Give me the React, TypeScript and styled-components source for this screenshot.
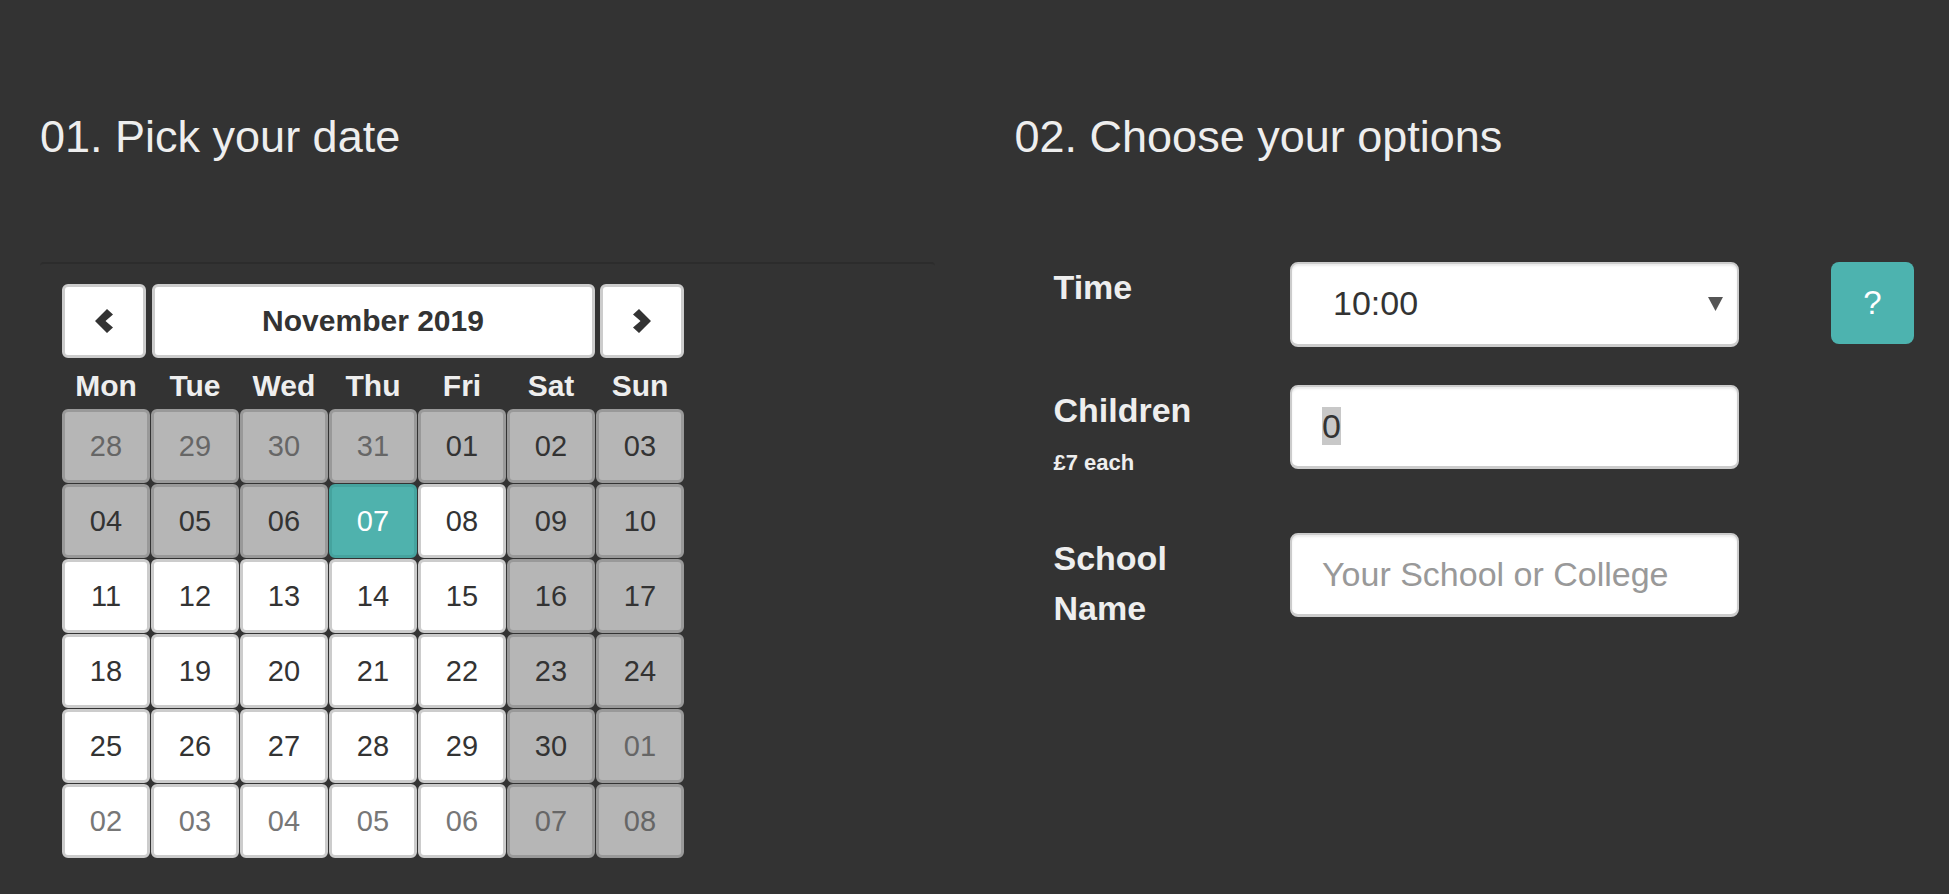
import styled, { createGlobalStyle } from "styled-components";

type Tone = "white" | "gray" | "selected";

interface DayCell {
  label: string;
  tone: Tone;
  muted?: boolean;
}

const GlobalStyle = createGlobalStyle`
  html, body {
    margin: 0;
    padding: 0;
    background: #333333;
    font-family: "Liberation Sans", Arial, sans-serif;
  }
  * {
    box-sizing: border-box;
  }
`;

const Page = styled.div`
  display: grid;
  grid-template-columns: minmax(0, 1fr) minmax(0, 1fr);
  min-height: 894px;
  background: #333333;
`;

const Column = styled.section`
  padding: 0 40px;
`;

const Heading = styled.h2`
  margin: 112px 0 100px;
  font-size: 45px;
  font-weight: 400;
  line-height: 1.1;
  color: #eeeeee;
`;

const Panel = styled.div`
  border-top: 2px solid #2c2c2c;
  border-radius: 4px;
  padding: 20px 22px;
`;

const Calendar = styled.div`
  width: 622px;
`;

const NavRow = styled.div`
  display: grid;
  grid-template-columns: 84px 1fr 84px;
  gap: 5.5px;
  height: 74px;
`;

const NavButton = styled.div`
  display: flex;
  align-items: center;
  justify-content: center;
  background: #ffffff;
  border: 3px solid #cccccc;
  border-radius: 6px;
  color: #333333;
  font-size: 30px;
  font-weight: 700;
`;

const DayNames = styled.div`
  display: grid;
  grid-template-columns: repeat(7, 1fr);
  gap: 1px;
  height: 51px;
  align-items: end;
  padding-bottom: 6px;
`;

const DayName = styled.div`
  text-align: center;
  color: #eeeeee;
  font-size: 30px;
  font-weight: 700;
`;

const DayGrid = styled.div`
  display: grid;
  grid-template-columns: repeat(7, 1fr);
  grid-auto-rows: 74px;
  gap: 1px;
`;

const toneStyles: Record<Tone, { bg: string; border: string; color: string; muted: string }> = {
  white: { bg: "#ffffff", border: "#cccccc", color: "#333333", muted: "#777777" },
  gray: { bg: "#b6b6b6", border: "#999999", color: "#333333", muted: "#666666" },
  selected: { bg: "#4fb2ad", border: "#45a39e", color: "#ffffff", muted: "#ffffff" },
};

const Day = styled.div<{ $tone: Tone; $muted?: boolean }>`
  display: flex;
  align-items: center;
  justify-content: center;
  padding-top: 1px;
  border: 3px solid ${(p) => toneStyles[p.$tone].border};
  border-radius: 6px;
  background: ${(p) => toneStyles[p.$tone].bg};
  color: ${(p) => (p.$muted ? toneStyles[p.$tone].muted : toneStyles[p.$tone].color)};
  font-size: 29px;
`;

const Form = styled.div`
  display: flex;
  flex-direction: column;
  gap: 38px;
  padding-left: 39px;
`;

const Row = styled.div`
  display: grid;
  grid-template-columns: 236.5px 449px 92px 83px;
  align-items: start;
`;

const Label = styled.div`
  max-width: 180px;
  color: #eeeeee;
  font-size: 34px;
  font-weight: 700;
  line-height: 50px;
`;

const Note = styled.div`
  margin: 11px 0 16px;
  font-size: 22px;
  line-height: 33px;
`;

const Select = styled.div`
  display: flex;
  align-items: center;
  justify-content: space-between;
  height: 85px;
  padding: 0 14px 0 41px;
  background: #ffffff;
  border: 2px solid #cccccc;
  border-bottom-width: 3px;
  border-radius: 8px;
  box-shadow: inset 0 2px 2px rgba(0, 0, 0, 0.075);
  color: #333333;
  font-size: 34px;
`;

const Field = styled.div`
  display: flex;
  align-items: center;
  height: 84px;
  padding-left: 30px;
  background: #ffffff;
  border: 2px solid #cccccc;
  border-bottom-width: 3px;
  border-radius: 8px;
  box-shadow: inset 0 2px 2px rgba(0, 0, 0, 0.075);
  color: #333333;
  font-size: 34px;
`;

const TextInput = styled.input`
  width: 100%;
  height: 84px;
  padding: 0 0 0 30px;
  background: #ffffff;
  border: 2px solid #cccccc;
  border-bottom-width: 3px;
  border-radius: 8px;
  box-shadow: inset 0 2px 2px rgba(0, 0, 0, 0.075);
  color: #333333;
  font-family: "Liberation Sans", Arial, sans-serif;
  font-size: 34px;
  outline: none;

  &::placeholder {
    color: #999999;
  }
`;

const Highlight = styled.span`
  background: #c8c8c8;
  line-height: 38px;
`;

const HelpButton = styled.button`
  grid-column: 4;
  width: 83px;
  height: 82px;
  border: none;
  border-radius: 8px;
  background: #4db3af;
  color: #ffffff;
  font-family: "Liberation Sans", Arial, sans-serif;
  font-size: 33px;
  cursor: pointer;
`;

const Chevron = ({ dir }: { dir: "left" | "right" }) => {
  const pts =
    dir === "left"
      ? "0,12 12,0 18,5.5 10.5,12 18,18.5 12,24"
      : "18,12 6,0 0,5.5 7.5,12 0,18.5 6,24";
  return (
    <svg width="18" height="24" viewBox="0 0 18 24">
      <polygon points={pts} fill="#333333" />
    </svg>
  );
};

const dayNames = ["Mon", "Tue", "Wed", "Thu", "Fri", "Sat", "Sun"];

const g = (label: string, muted = false): DayCell => ({ label, tone: "gray", muted });
const w = (label: string, muted = false): DayCell => ({ label, tone: "white", muted });

const days: DayCell[] = [
  g("28", true), g("29", true), g("30", true), g("31", true), g("01"), g("02"), g("03"),
  g("04"), g("05"), g("06"), { label: "07", tone: "selected" }, w("08"), g("09"), g("10"),
  w("11"), w("12"), w("13"), w("14"), w("15"), g("16"), g("17"),
  w("18"), w("19"), w("20"), w("21"), w("22"), g("23"), g("24"),
  w("25"), w("26"), w("27"), w("28"), w("29"), g("30"), g("01", true),
  w("02", true), w("03", true), w("04", true), w("05", true), w("06", true), g("07", true), g("08", true),
];

export default function App() {
  return (
    <>
      <GlobalStyle />
      <Page>
        <Column>
          <Heading>01. Pick your date</Heading>
          <Panel>
            <Calendar>
              <NavRow>
                <NavButton>
                  <Chevron dir="left" />
                </NavButton>
                <NavButton>November 2019</NavButton>
                <NavButton>
                  <Chevron dir="right" />
                </NavButton>
              </NavRow>
              <DayNames>
                {dayNames.map((d) => (
                  <DayName key={d}>{d}</DayName>
                ))}
              </DayNames>
              <DayGrid>
                {days.map((d, i) => (
                  <Day key={i} $tone={d.tone} $muted={d.muted}>
                    {d.label}
                  </Day>
                ))}
              </DayGrid>
            </Calendar>
          </Panel>
        </Column>
        <Column>
          <Heading>02. Choose your options</Heading>
          <Form>
            <Row>
              <Label>Time</Label>
              <Select>
                <span>10:00</span>
                <svg width="15" height="14" viewBox="0 0 15 14">
                  <polygon points="0,0 15,0 7.5,14" fill="#555555" />
                </svg>
              </Select>
              <HelpButton>?</HelpButton>
            </Row>
            <Row>
              <Label>
                Children
                <Note>£7 each</Note>
              </Label>
              <Field>
                <Highlight>0</Highlight>
              </Field>
            </Row>
            <Row>
              <Label>School Name</Label>
              <TextInput placeholder="Your School or College" />
            </Row>
          </Form>
        </Column>
      </Page>
    </>
  );
}
